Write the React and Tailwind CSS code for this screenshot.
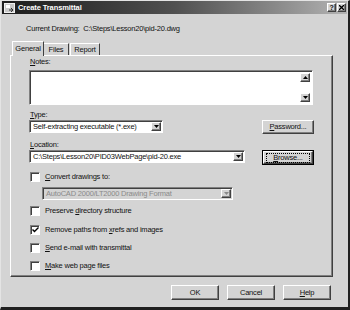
import React from "react";

const raised =
  "border border-t-white border-l-white border-b-[#404040] border-r-[#404040] shadow-[inset_-1px_-1px_0_#808080]";
const sunken =
  "border border-t-[#808080] border-l-[#808080] border-b-white border-r-white shadow-[inset_1px_1px_0_#404040]";

const U = ({ children }) => <span className="underline underline-offset-[1px]">{children}</span>;

const DropArrow = ({ disabled }) => (
  <div className={`w-[10px] h-full bg-[#d4d4d4] flex items-center justify-center ${raised}`}>
    <svg width="5" height="3" viewBox="0 0 5 3">
      <path d="M0 0h5L2.5 3z" fill={disabled ? "#8a8a8a" : "#000"} />
    </svg>
  </div>
);

const Checkbox = ({ checked, children }) => (
  <div className="flex items-center h-[10px] ml-[1px]">
    <div className={`w-[10px] h-[10px] bg-white flex items-center justify-center ${sunken}`}>
      {checked && (
        <svg width="7" height="6" viewBox="0 0 7 6">
          <path d="M0.5 2.5L2.5 4.5L6.5 0.5" stroke="#000" strokeWidth="1.4" fill="none" />
        </svg>
      )}
    </div>
    <span className="ml-[5px] leading-[10px]">{children}</span>
  </div>
);

const Button = ({ children, className = "" }) => (
  <div className={`bg-[#d4d4d4] flex items-center justify-center ${raised} ${className}`}>
    {children}
  </div>
);

export default function App() {
  return (
    <div className="w-[350px] h-[310px] bg-[#d4d4d4] text-[#111] font-['Liberation_Sans',Arial,sans-serif] text-[7.5px] tracking-[-0.2px] border border-t-[#e4e4e4] border-l-[#e4e4e4] border-b-[#202020] border-r-[#202020] border-b-[3px] border-r-[2px] flex flex-col overflow-hidden">
      {/* title bar */}
      <div className="h-[13px] mx-[1px] flex items-center bg-gradient-to-r from-[#1c1c1c] via-[#505050] to-[#b4b4b4]">
        <svg width="11" height="10" viewBox="0 0 11 10" className="ml-[2px]">
          <rect x="0.5" y="0.5" width="10" height="9" fill="#c8c8c8" stroke="#f0f0f0" />
          <rect x="2" y="2" width="4" height="3" fill="#fff" />
          <path d="M5 7h4M7 5l2 2-2 2" stroke="#303030" strokeWidth="1" fill="none" />
        </svg>
        <span className="ml-[3px] text-white font-bold text-[7.5px] tracking-[-0.1px] leading-[13px]">
          Create Transmittal
        </span>
        <div className="ml-auto mr-[1px] flex gap-[1px]">
          <Button className="w-[9px] h-[9px] text-[7px] font-bold leading-none">?</Button>
          <Button className="w-[9px] h-[9px]">
            <svg width="5" height="5" viewBox="0 0 5 5">
              <path d="M0 0L5 5M5 0L0 5" stroke="#000" strokeWidth="1.3" />
            </svg>
          </Button>
        </div>
      </div>

      <div className="mt-[10px] ml-[25px] leading-[10px]">Current Drawing:&nbsp; C:\Steps\Lesson20\pid-20.dwg</div>

      {/* tabs */}
      <div className="mt-[7px] ml-[11px] h-[14px] flex items-end">
        <div className="relative -mb-px h-[15px] w-[32px] bg-[#d4d4d4] border-t border-l border-t-white border-l-white border-r border-r-[#404040] flex items-center justify-center z-10">
          General
        </div>
        <div className="h-[12px] w-[25px] border-t border-t-white border-r border-r-[#404040] flex items-center justify-center">
          Files
        </div>
        <div className="h-[12px] w-[30px] ml-[1px] border-t border-l border-t-white border-l-white border-r border-r-[#404040] flex items-center justify-center">
          Report
        </div>
      </div>

      {/* panel */}
      <div className={`ml-[9px] w-[323px] h-[222px] pl-[18px] flex flex-col ${raised}`}>
        <div className="mt-[1px] leading-[10px] ml-[1px]">
          <U>N</U>otes:
        </div>
        <div className={`mt-[3px] w-[284px] h-[35px] bg-white flex justify-end p-[2px] ${sunken}`}>
          <div className="w-[10px] h-full flex flex-col bg-white">
            <Button className="w-[10px] h-[9px]">
              <svg width="5" height="3" viewBox="0 0 5 3"><path d="M0 3h5L2.5 0z" fill="#000" /></svg>
            </Button>
            <div className="flex-1" />
            <Button className="w-[10px] h-[9px]">
              <svg width="5" height="3" viewBox="0 0 5 3"><path d="M0 0h5L2.5 3z" fill="#000" /></svg>
            </Button>
          </div>
        </div>

        <div className="mt-[5px] ml-[1px] leading-[10px]">
          <U>T</U>ype:
        </div>
        <div className="w-[285px] flex justify-between items-start">
          <div className={`w-[134px] h-[13px] bg-white flex items-center p-[1px] ${sunken}`}>
            <span className="flex-1 pl-[2px] leading-[10px]">Self-extracting executable (*.exe)</span>
            <DropArrow />
          </div>
          <Button className="w-[52px] h-[14px]">
            <span><U>P</U>assword...</span>
          </Button>
        </div>

        <div className="mt-[6px] ml-[1px] leading-[10px]">
          <U>L</U>ocation:
        </div>
        <div className="w-[285px] flex justify-between items-start">
          <div className={`w-[216px] h-[13px] bg-white flex items-center p-[1px] ${sunken}`}>
            <span className="flex-1 pl-[2px] leading-[10px]">C:\Steps\Lesson20\PID03WebPage\pid-20.exe</span>
            <DropArrow />
          </div>
          <div className="w-[52px] h-[15px] border border-black">
            <Button className="w-full h-full">
              <span className="border border-dotted border-black px-[6px] leading-[8px]">
                <U>B</U>rowse...
              </span>
            </Button>
          </div>
        </div>

        <div className="mt-[7px]">
          <Checkbox>
            <U>C</U>onvert drawings to:
          </Checkbox>
        </div>
        <div className={`mt-[5px] ml-[13px] w-[191px] h-[13px] bg-[#d4d4d4] flex items-center p-[1px] ${sunken}`}>
          <span className="flex-1 pl-[2px] leading-[10px] text-[#8a8a8a]">AutoCAD 2000/LT2000 Drawing Format</span>
          <DropArrow disabled />
        </div>

        <div className="mt-[6px]">
          <Checkbox>
            Preserve <U>d</U>irectory structure
          </Checkbox>
        </div>
        <div className="mt-[9px]">
          <Checkbox checked>
            Remove paths from <U>x</U>refs and images
          </Checkbox>
        </div>
        <div className="mt-[8px]">
          <Checkbox>
            <U>S</U>end e-mail with transmittal
          </Checkbox>
        </div>
        <div className="mt-[8px]">
          <Checkbox>
            <U>M</U>ake web page files
          </Checkbox>
        </div>
      </div>

      {/* bottom buttons */}
      <div className="mt-[8px] ml-[170px] flex gap-[8px]">
        <Button className="w-[48px] h-[15px]">OK</Button>
        <Button className="w-[48px] h-[15px]">Cancel</Button>
        <Button className="w-[48px] h-[15px]">
          <span><U>H</U>elp</span>
        </Button>
      </div>
    </div>
  );
}
